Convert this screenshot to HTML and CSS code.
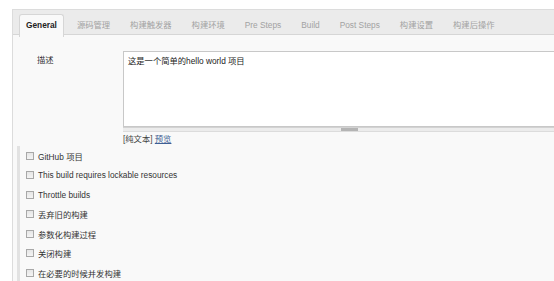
FILE: index.html
```html
<!doctype html>
<html lang="zh-CN">
<head>
    <meta charset="UTF-8">
    <title>General</title>
    <link rel="stylesheet" href="styles.css">
</head>
<body>
<div class="page">
    <div class="config">
        <ul class="tabbar">
            <li class="tab active">General</li>
            <li class="tab">源码管理</li>
            <li class="tab">构建触发器</li>
            <li class="tab">构建环境</li>
            <li class="tab">Pre Steps</li>
            <li class="tab">Build</li>
            <li class="tab">Post Steps</li>
            <li class="tab">构建设置</li>
            <li class="tab">构建后操作</li>
        </ul>

        <div class="desc_row">
            <div class="desc_label">描述</div>
            <div class="desc_field">
                <textarea class="desc_text">这是一个简单的hello world 项目</textarea>
                <div class="grip"><span class="grip_handle"></span></div>
                <div class="desc_hint">[纯文本] <a href="#" class="preview">预览</a></div>
            </div>
        </div>

        <ul class="options">
            <li class="option"><input type="checkbox" class="check">GitHub 项目</li>
            <li class="option"><input type="checkbox" class="check">This build requires lockable resources</li>
            <li class="option"><input type="checkbox" class="check">Throttle builds</li>
            <li class="option"><input type="checkbox" class="check">丢弃旧的构建</li>
            <li class="option"><input type="checkbox" class="check">参数化构建过程</li>
            <li class="option"><input type="checkbox" class="check">关闭构建</li>
            <li class="option"><input type="checkbox" class="check">在必要的时候并发构建</li>
        </ul>
    </div>
</div>
</body>
</html>
```

FILE: styles.css
```css
ul, li {
    margin: 0;
    padding: 0;
    list-style: none;
}

body {
    margin: 0;
    background: #fff;
    font-family: "Liberation Sans", Arial, "Noto Sans CJK SC", sans-serif;
    font-size: 8.3px;
    color: #333;
    overflow: hidden;
}

.page {
    padding: 9px 0 0 12px;
}

.config {
    border-top: 1px solid #dcdcdc;
    border-left: 1px solid #dcdcdc;
    background: #f9f9f9;
    height: 280px;
}

.tabbar {
    display: flex;
    gap: 6px;
    height: 25px;
    padding: 0 0 0 6px;
    box-sizing: border-box;
    padding-top: 4px;
    background: #ebebeb;
    border-bottom: 1px solid #d6d6d6;
    white-space: nowrap;
}

.tab {
    height: 21px;
    line-height: 21px;
    padding: 0 6px;
    border: 1px solid transparent;
    border-bottom: none;
    color: #a2a2a2;
}

.tab.active {
    height: 22px;
    background: #f9f9f9;
    border-color: #d6d6d6;
    border-radius: 3px 3px 0 0;
    color: #222;
    font-weight: bold;
}

.desc_row {
    display: flex;
    padding-top: 16px;
}

.desc_label {
    width: 86px;
    flex-shrink: 0;
    padding: 3px 0 0 24px;
    line-height: 13px;
}

.desc_field {
    width: 453px;
    flex-shrink: 0;
}

.desc_text {
    display: block;
    box-sizing: border-box;
    width: 453px;
    height: 76px;
    margin: 0;
    padding: 3px 4px;
    border: 1px solid #c8c8c8;
    background: #fff;
    font: inherit;
    line-height: 13px;
    color: #222;
    resize: none;
    overflow: hidden;
}

.grip {
    display: flex;
    justify-content: center;
    height: 3px;
    border-top: 1px solid #d2d2d2;
    border-bottom: 1px solid #dcdcdc;
    background: #ececec;
}

.grip_handle {
    width: 17px;
    background: #b4b4b4;
}

.desc_hint {
    line-height: 12px;
    margin-top: 1px;
    color: #444;
}

.preview {
    color: #3e5f95;
    text-decoration: underline;
}

.options {
    margin: 1px 0 0 4px;
    padding-left: 6px;
    border-left: 3px solid #e2e2e2;
}

.option {
    display: flex;
    align-items: center;
    height: 19.5px;
    color: #333;
}

.check {
    appearance: none;
    -webkit-appearance: none;
    box-sizing: border-box;
    width: 8px;
    height: 8px;
    margin: 0 4px 0 0;
    border: 1px solid #a8a8a8;
    background: linear-gradient(#e6e6e6, #f4f4f4);
}
```
